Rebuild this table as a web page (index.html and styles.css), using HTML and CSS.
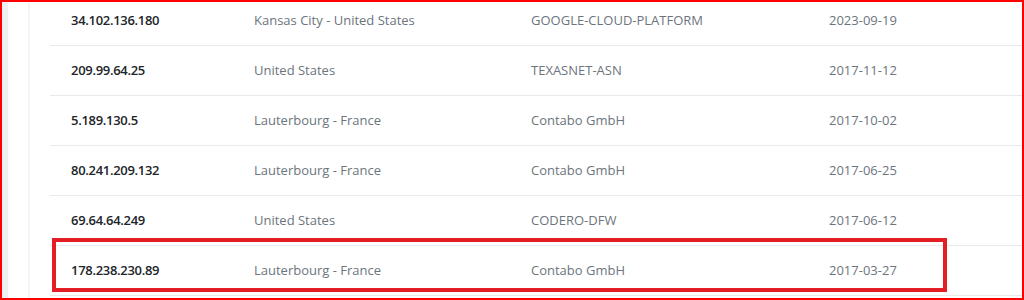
FILE: index.html
```html
<!DOCTYPE html>
<html lang="en">
<head>
<meta charset="utf-8">
<title>IP history</title>
<link rel="stylesheet" href="styles.css">
</head>
<body>
<div class="frame">
  <div class="strip"></div>
  <div class="gap"></div>
  <div class="card">
    <div class="rows">
      <div class="row"><span class="ip">34.102.136.180</span><span class="cell">Kansas City - United States</span><span class="cell">GOOGLE-CLOUD-PLATFORM</span><span class="cell">2023-09-19</span></div>
      <div class="row"><span class="ip">209.99.64.25</span><span class="cell">United States</span><span class="cell">TEXASNET-ASN</span><span class="cell">2017-11-12</span></div>
      <div class="row"><span class="ip">5.189.130.5</span><span class="cell">Lauterbourg - France</span><span class="cell">Contabo GmbH</span><span class="cell">2017-10-02</span></div>
      <div class="row"><span class="ip">80.241.209.132</span><span class="cell">Lauterbourg - France</span><span class="cell">Contabo GmbH</span><span class="cell">2017-06-25</span></div>
      <div class="row"><span class="ip">69.64.64.249</span><span class="cell">United States</span><span class="cell">CODERO-DFW</span><span class="cell">2017-06-12</span></div>
      <div class="row highlighted"><span class="ip">178.238.230.89</span><span class="cell">Lauterbourg - France</span><span class="cell">Contabo GmbH</span><span class="cell">2017-03-27</span><div class="mark"></div></div>
    </div>
  </div>
</div>
</body>
</html>
```

FILE: styles.css
```css
html, body {
  margin: 0;
  padding: 0;
  background: #ffffff;
}

.frame {
  box-sizing: border-box;
  width: 1024px;
  height: 300px;
  border: 2px solid #ff0000;
  display: flex;
  overflow: hidden;
  background: #ffffff;
}

.strip {
  width: 6px;
  flex: none;
  background: #eef0f3;
}

.gap {
  width: 20px;
  flex: none;
}

.card {
  flex: 1;
  border-left: 2px solid #f4f5f7;
  padding-left: 20px;
  min-width: 0;
}

.rows {
  margin-top: -6px;
}

.row {
  position: relative;
  box-sizing: border-box;
  height: 50px;
  border-bottom: 1px solid #e9eaec;
  display: grid;
  grid-template-columns: 183px 277px 298px 1fr;
  align-items: center;
  padding-left: 21px;
  padding-bottom: 2px;
  font-family: "Open Sans", "Noto Sans", sans-serif;
  font-size: 13px;
}

.ip {
  color: #212529;
  font-weight: 600;
  letter-spacing: -0.3px;
}

.cell {
  color: #6c757d;
}

.mark {
  position: absolute;
  left: 2px;
  top: -8px;
  width: 895px;
  height: 54px;
  box-sizing: border-box;
  border: 4px solid #e31e24;
  pointer-events: none;
}
```
